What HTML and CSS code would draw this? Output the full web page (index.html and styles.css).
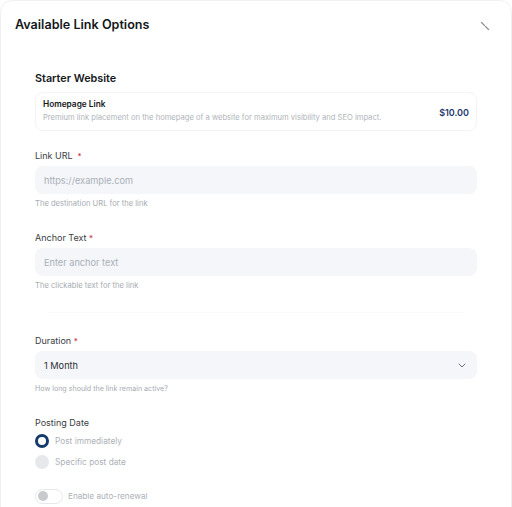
FILE: index.html
```html
<!DOCTYPE html>
<html lang="en">
<head>
<meta charset="utf-8">
<title>Available Link Options</title>
<link rel="stylesheet" href="styles.css">
</head>
<body>
<div class="modal">
  <div class="modal-header">
    <h2 class="modal-title">Available Link Options</h2>
    <button class="close-btn" aria-label="Close">
      <svg width="10" height="10" viewBox="0 0 10 10"><path d="M1.5 1.5 L8.5 8.5" stroke="#8f9297" stroke-width="1.3" stroke-linecap="round"/><path d="M8.5 1.5 L1.5 8.5" stroke="#f4f4f5" stroke-width="1" stroke-linecap="round"/></svg>
    </button>
  </div>
  <div class="modal-body">
    <h3 class="section-title">Starter Website</h3>
    <div class="option-card">
      <div class="option-info">
        <div class="option-name">Homepage Link</div>
        <div class="option-desc">Premium link placement on the homepage of a website for maximum visibility and SEO impact.</div>
      </div>
      <div class="option-price">$10.00</div>
    </div>

    <div class="field field-first">
      <label class="field-label">Link URL <span class="req">&nbsp;*</span></label>
      <div class="input"><span class="placeholder">https://example.com</span></div>
      <div class="helper">The destination URL for the link</div>
    </div>

    <div class="field field-next">
      <label class="field-label">Anchor Text <span class="req">*</span></label>
      <div class="input"><span class="placeholder">Enter anchor text</span></div>
      <div class="helper">The clickable text for the link</div>
    </div>

    <div class="divider"></div>

    <div class="field field-after-divider">
      <label class="field-label">Duration <span class="req">*</span></label>
      <div class="input select"><span class="value">1 Month</span>
        <svg class="chevron" width="8" height="5" viewBox="0 0 8 5"><path d="M1 1 L4 4 L7 1" fill="none" stroke="#6b7079" stroke-width="1" stroke-linecap="round" stroke-linejoin="round"/></svg>
      </div>
      <div class="helper helper-tight">How long should the link remain active?</div>
    </div>

    <div class="field field-next">
      <label class="field-label">Posting Date</label>
      <div class="radio-row first-radio"><span class="radio checked"></span><span class="radio-label">Post immediately</span></div>
      <div class="radio-row second-radio"><span class="radio"></span><span class="radio-label">Specific post date</span></div>
    </div>

    <div class="toggle-row">
      <span class="toggle"><span class="knob"></span></span>
      <span class="toggle-label">Enable auto-renewal</span>
    </div>
  </div>
</div>
</body>
</html>
```
FILE: styles.css
```css
* { box-sizing: border-box; margin: 0; padding: 0; }
html, body { background: #ffffff; }
body {
  font-family: Inter, "Noto Sans", "Liberation Sans", sans-serif;
  color: #1f2328;
  height: 507px;
  overflow: hidden;
}
.modal {
  width: 512px;
  min-height: 560px;
  border: 1px solid #f1f1f3;
  border-radius: 12px;
  background: #fff;
}
.modal-header {
  height: 47px;
  display: flex;
  align-items: center;
  justify-content: space-between;
  padding: 0 21px 0 14px;
}
.modal-title {
  font-size: 12.6px;
  font-weight: 600;
  color: #15171a;
}
.close-btn {
  border: 0;
  background: none;
  width: 10px;
  height: 10px;
  display: flex;
  margin-top: 2px;
}
.modal-body {
  padding: 0 34px;
  display: flex;
  flex-direction: column;
}
.section-title {
  margin-top: 24px;
  font-size: 10.8px;
  line-height: 14px;
  font-weight: 600;
  color: #15171a;
}
.option-card {
  margin-top: 6px;
  border: 1px solid #f3f4f6;
  border-radius: 8px;
  padding: 5px 7px 6px 7px;
  display: flex;
  align-items: center;
  justify-content: space-between;
  box-shadow: 0 1px 2px rgba(0,0,0,0.02);
}
.option-info { display: flex; flex-direction: column; gap: 2px; }
.option-name {
  font-size: 8.3px;
  line-height: 12px;
  font-weight: 600;
  color: #15171a;
}
.option-desc {
  font-size: 7.6px;
  line-height: 12px;
  color: #b0b4ba;
}
.option-price {
  font-size: 9px;
  font-weight: 600;
  color: #1e3a6b;
  margin-top: 2px;
}
.field { display: flex; flex-direction: column; }
.field-first { margin-top: 19px; }
.field-next { margin-top: 23px; }
.field-after-divider { margin-top: 22px; }
.field-label {
  font-size: 9px;
  line-height: 12px;
  color: #3a3d42;
}
.req { color: #c42a3e; font-size: 8px; }
.input {
  margin-top: 4px;
  height: 28px;
  background: #f4f6f9;
  border-radius: 8px;
  display: flex;
  align-items: center;
  padding: 0 9px;
  font-size: 9.2px;
}
.placeholder { color: #aab0b8; }
.value { color: #2c2f34; }
.select { justify-content: space-between; padding-right: 11px; }
.chevron { display: block; }
.helper {
  margin-top: 5px;
  font-size: 7.6px;
  line-height: 10px;
  color: #a6abb2;
}
.helper-tight { font-size: 7.1px; }
.divider {
  margin: 21px 13px 0 13px;
  height: 1px;
  background: #fafafb;
}
.radio-row {
  display: flex;
  align-items: center;
  gap: 6px;
  height: 16px;
}
.first-radio { margin-top: 4px; }
.second-radio { margin-top: 5px; }
.radio {
  width: 14px;
  height: 14px;
  border-radius: 50%;
  background: #e6e8ec;
  flex: none;
}
.radio.checked {
  background: #fff;
  border: 3.5px solid #173a6c;
}
.radio-label {
  font-size: 8.3px;
  color: #adb1b8;
}
.toggle-row {
  margin-top: 18px;
  display: flex;
  align-items: center;
  gap: 5px;
  height: 16px;
}
.toggle {
  width: 28px;
  height: 15px;
  border-radius: 8px;
  border: 1px solid #e5e7eb;
  background: #fff;
  display: flex;
  align-items: center;
  padding-left: 2px;
}
.knob {
  width: 10px;
  height: 10px;
  border-radius: 50%;
  background: #c9cacd;
}
.toggle-label {
  font-size: 8.2px;
  color: #adb1b8;
}
```
